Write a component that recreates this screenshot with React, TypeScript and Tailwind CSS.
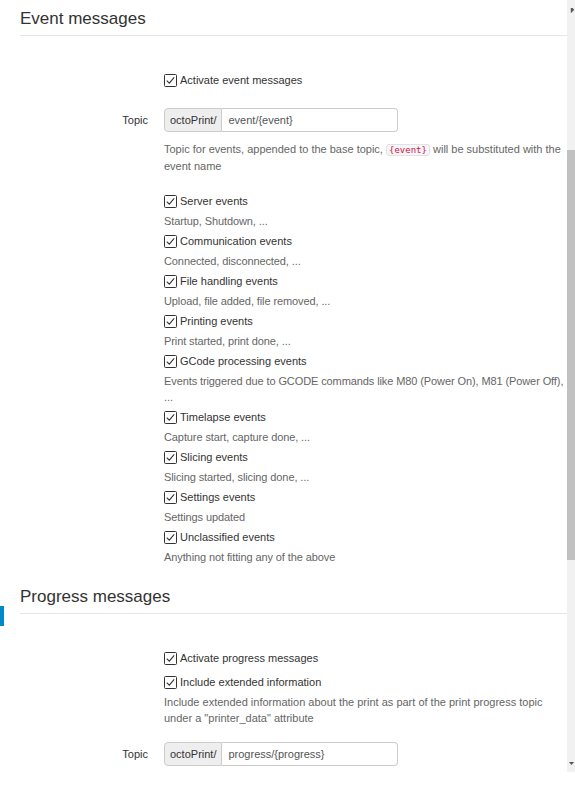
import React from 'react';

const Check: React.FC = () => (
  <svg width="13" height="13" viewBox="0 0 13 13" className="shrink-0">
    <rect x="0.5" y="0.5" width="12" height="12" rx="1" fill="#fff" stroke="#333" />
    <path d="M2.8 6.6 L5.3 9.2 L10.2 3.4" fill="none" stroke="#333" strokeWidth="1.1" />
  </svg>
);

const CheckRow: React.FC<{ label: string }> = ({ label }) => (
  <div className="flex items-center gap-[3px] h-5 text-[#333]">
    <Check />
    <span>{label}</span>
  </div>
);

const TopicRow: React.FC<{ value: string }> = ({ value }) => (
  <div className="flex items-center">
    <div className="w-[128px] shrink-0 text-right text-[#333]">Topic</div>
    <div className="ml-4 flex h-6 w-[234px]">
      <div className="flex items-center px-[5px] bg-[#eee] border border-[#ccc] rounded-l-[4px] text-[#333]">
        octoPrint/
      </div>
      <div className="flex flex-1 items-center pl-[6px] border border-l-0 border-[#ccc] rounded-r-[4px] text-[#555]">
        {value}
      </div>
    </div>
  </div>
);

const Heading: React.FC<{ title: string }> = ({ title }) => (
  <h2 className="text-[17px] leading-[26px] pt-[6px] pb-[3px] text-[#333] border-b border-[#e5e5e5]">{title}</h2>
);

const events = [
  { label: 'Server events', desc: 'Startup, Shutdown, ...' },
  { label: 'Communication events', desc: 'Connected, disconnected, ...' },
  { label: 'File handling events', desc: 'Upload, file added, file removed, ...' },
  { label: 'Printing events', desc: 'Print started, print done, ...' },
  { label: 'GCode processing events', desc: 'Events triggered due to GCODE commands like M80 (Power On), M81 (Power Off), ...' },
  { label: 'Timelapse events', desc: 'Capture start, capture done, ...' },
  { label: 'Slicing events', desc: 'Slicing started, slicing done, ...' },
  { label: 'Settings events', desc: 'Settings updated' },
  { label: 'Unclassified events', desc: 'Anything not fitting any of the above' },
];

const App: React.FC = () => {
  return (
    <div
      className="w-[575px] h-[785px] bg-white flex overflow-hidden text-[11px]"
      style={{ fontFamily: '"Liberation Sans", Arial, sans-serif' }}
    >
      <div className="flex-1 flex flex-col">
        {/* Event messages */}
        <div className="flex">
          <div className="w-5 shrink-0" />
          <div className="flex-1">
            <Heading title="Event messages" />
            <div className="ml-[144px] mt-[34px]">
              <CheckRow label="Activate event messages" />
            </div>
            <div className="mt-[18px]">
              <TopicRow value="event/{event}" />
            </div>
            <p className="ml-[144px] mt-[9px] leading-4 text-[#666]">
              Topic for events, appended to the base topic,{' '}
              <code
                className="px-[2px] text-[9px] text-[#d14] bg-[#f7f7f9] border border-[#e1e1e8] rounded-[3px]"
                style={{ fontFamily: '"DejaVu Sans Mono", monospace' }}
              >
                {'{event}'}
              </code>{' '}
              will be substituted with the event name
            </p>
            <div className="ml-[144px] mt-[17px]">
              {events.map((e) => (
                <div key={e.label}>
                  <CheckRow label={e.label} />
                  <p className="mt-0.5 mb-0.5 leading-4 tracking-[-0.1px] text-[#666]">{e.desc}</p>
                </div>
              ))}
            </div>
          </div>
        </div>

        {/* Progress messages */}
        <div className="flex pt-[11px]">
          <div className="w-5 shrink-0">
            <div className="mt-[28px] h-5 w-1 bg-[#0088cc]" />
          </div>
          <div className="flex-1">
            <Heading title="Progress messages" />
            <div className="ml-[144px] mt-[34px] flex flex-col gap-1">
              <CheckRow label="Activate progress messages" />
              <div>
                <CheckRow label="Include extended information" />
                <p className="mt-0.5 leading-4 text-[#666]">
                  Include extended information about the print as part of the print progress topic under a
                  "printer_data" attribute
                </p>
              </div>
            </div>
            <div className="mt-4">
              <TopicRow value="progress/{progress}" />
            </div>
          </div>
        </div>
      </div>

      {/* scrollbar */}
      <div className="w-2 h-[772px] shrink-0 flex flex-col bg-[#f1f1f1]">
        <div className="h-[150px] flex justify-center pt-[8px]">
          <svg width="5" height="5" viewBox="0 0 5 5">
            <path d="M0 5 L5 0 L5 5 Z" fill="#555" transform="rotate(-45 2.5 2.5) translate(0 -1)" />
          </svg>
        </div>
        <div className="h-[410px] bg-[#c1c1c1]" />
        <div className="flex-1 flex justify-center items-end pb-[5px]">
          <svg width="5" height="5" viewBox="0 0 5 5">
            <path d="M0 0 L5 0 L2.5 3 Z" fill="#555" />
          </svg>
        </div>
      </div>
    </div>
  );
};

export default App;
